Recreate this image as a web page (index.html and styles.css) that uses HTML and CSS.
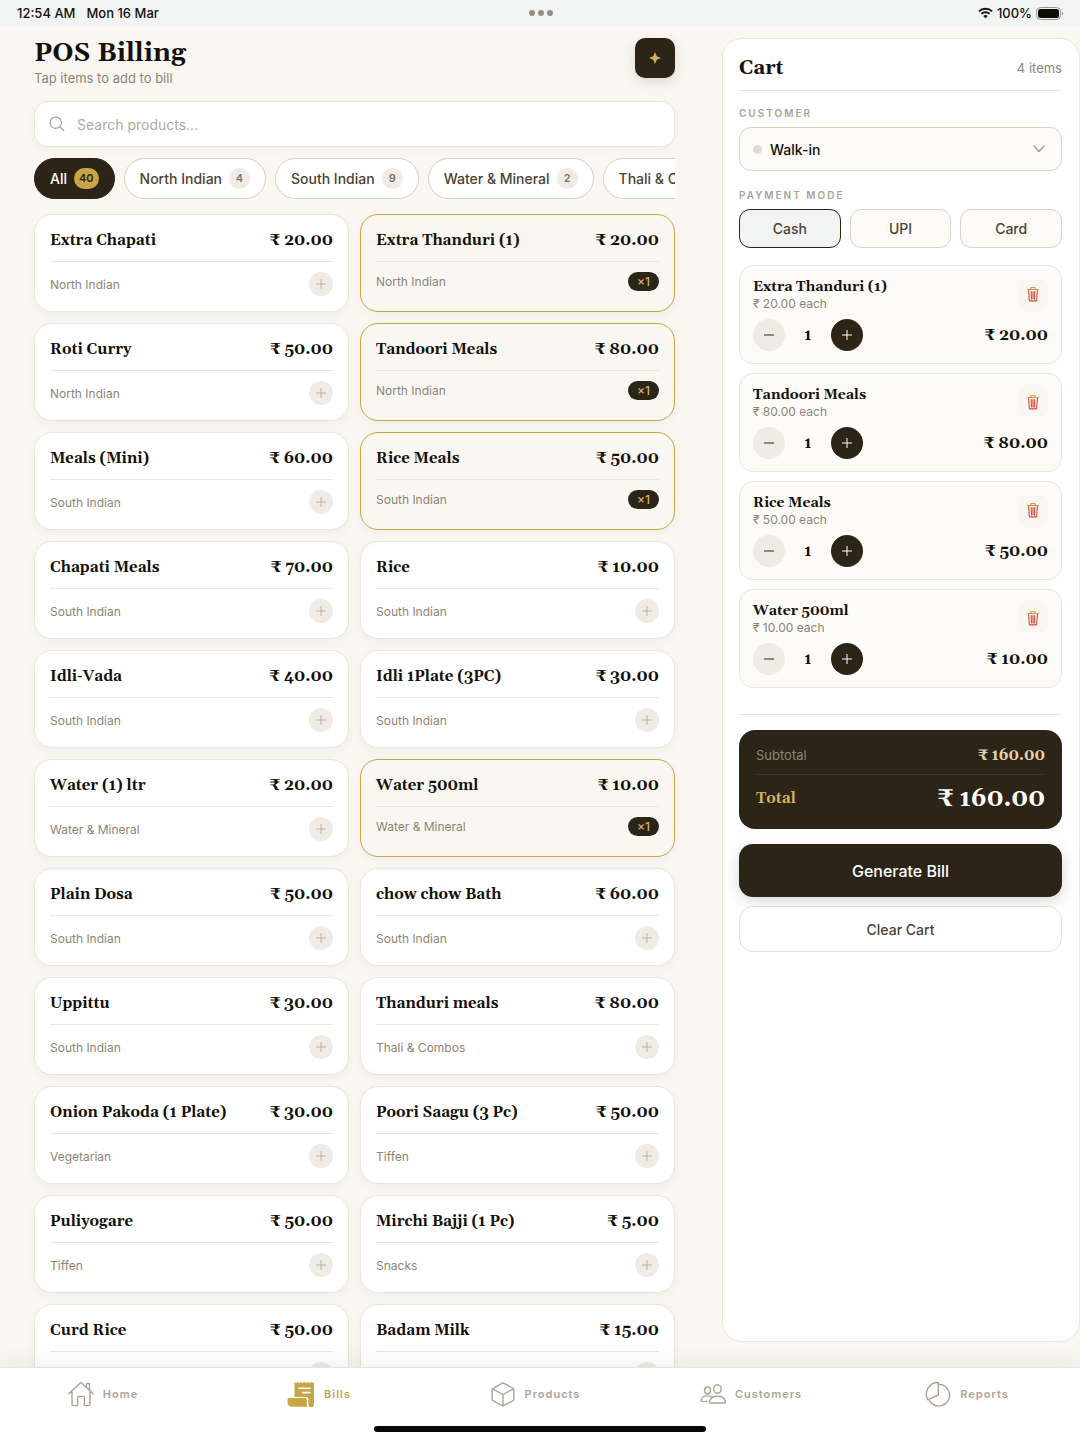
FILE: index.html
```html
<!DOCTYPE html>
<html lang="en">
<head>
    <meta charset="UTF-8">
    <meta name="viewport" content="width=device-width, initial-scale=1.0">
    <title>POS Billing</title>
    <link rel="stylesheet" href="styles.css">
</head>
<body>
    <!-- Shared icons -->
    <svg class="sprite" aria-hidden="true">
        <symbol id="icon-trash" viewBox="0 0 16 16">
            <path d="M3.600 4l.7 10.200c0 .4.300.7.700.7h6c.4 0 .7-.3.7-.7L12.400 4M6.200 5.500l.3 7.500M8 5.500V13M9.800 5.500L9.500 13" fill="none" stroke="currentColor" stroke-width="1.100" stroke-linejoin="round" stroke-linecap="round"/>
            <path d="M2.500 3.500h11M6 3.500V1.500h4v2" fill="none" stroke="#d9903f" stroke-width="1.200" stroke-linejoin="round" stroke-linecap="round"/>
        </symbol>
    </svg>

    <div class="status-bar">
        <div class="status-left"><span>12:54 AM</span><span>Mon 16 Mar</span></div>
        <div class="status-dots"><i></i><i></i><i></i></div>
        <div class="status-right">
            <svg class="wifi" viewBox="0 0 16 12" fill="none" stroke="currentColor" stroke-width="2">
                <path d="M1 4.300a10 10 0 0 1 14 0"/>
                <path d="M3.600 7a6.200 6.200 0 0 1 8.800 0"/>
                <path d="M8 11.600L5.600 9.200a3.400 3.400 0 0 1 4.800 0z" fill="currentColor" stroke="none"/>
            </svg>
            <span>100%</span>
            <svg class="battery" viewBox="0 0 28 13">
                <rect x=".5" y=".5" width="24" height="12" rx="4" fill="none" stroke="#9c978c"/>
                <rect x="2" y="2" width="21" height="9" rx="2.500" fill="#0f0c05"/>
                <path d="M26 4.500c1.600.6 1.600 3.400 0 4z" fill="#9c978c"/>
            </svg>
        </div>
    </div>

    <div class="main-container">
        <main class="catalog">
            <header class="page-header">
                <div>
                    <h1>POS Billing</h1>
                    <p>Tap items to add to bill</p>
                </div>
                <button class="sparkle-btn" aria-label="Quick actions">
                    <svg viewBox="0 0 12 12"><path d="M6 0l1.700 4.300L12 6 7.700 7.700 6 12 4.300 7.700 0 6l4.300-1.700z" fill="#d6b060"/></svg>
                </button>
            </header>

            <label class="search">
                <svg viewBox="0 0 18 18" fill="none" stroke="currentColor" stroke-width="1.200" stroke-linecap="round"><circle cx="7.500" cy="7.500" r="6.400"/><path d="M12.200 12.200l4.500 4.300"/></svg>
                <input type="text" placeholder="Search products..." aria-label="Search products">
            </label>

            <div class="chips">
                <button class="chip active">All <span class="count">40</span></button>
                <button class="chip">North Indian <span class="count">4</span></button>
                <button class="chip">South Indian <span class="count">9</span></button>
                <button class="chip">Water &amp; Mineral <span class="count">2</span></button>
                <button class="chip">Thali &amp; Combos</button>
            </div>

            <div class="product-grid">
                <article class="product">
                    <div class="product-head"><h3>Extra Chapati</h3><span class="price">₹ 20.00</span></div>
                    <div class="product-foot"><span>North Indian</span><button class="add" aria-label="Add Extra Chapati"></button></div>
                </article>
                <article class="product selected">
                    <div class="product-head"><h3>Extra Thanduri (1)</h3><span class="price">₹ 20.00</span></div>
                    <div class="product-foot"><span>North Indian</span><span class="qty-badge">×1</span></div>
                </article>
                <article class="product">
                    <div class="product-head"><h3>Roti Curry</h3><span class="price">₹ 50.00</span></div>
                    <div class="product-foot"><span>North Indian</span><button class="add" aria-label="Add Roti Curry"></button></div>
                </article>
                <article class="product selected">
                    <div class="product-head"><h3>Tandoori Meals</h3><span class="price">₹ 80.00</span></div>
                    <div class="product-foot"><span>North Indian</span><span class="qty-badge">×1</span></div>
                </article>
                <article class="product">
                    <div class="product-head"><h3>Meals (Mini)</h3><span class="price">₹ 60.00</span></div>
                    <div class="product-foot"><span>South Indian</span><button class="add" aria-label="Add Meals (Mini)"></button></div>
                </article>
                <article class="product selected">
                    <div class="product-head"><h3>Rice Meals</h3><span class="price">₹ 50.00</span></div>
                    <div class="product-foot"><span>South Indian</span><span class="qty-badge">×1</span></div>
                </article>
                <article class="product">
                    <div class="product-head"><h3>Chapati Meals</h3><span class="price">₹ 70.00</span></div>
                    <div class="product-foot"><span>South Indian</span><button class="add" aria-label="Add Chapati Meals"></button></div>
                </article>
                <article class="product">
                    <div class="product-head"><h3>Rice</h3><span class="price">₹ 10.00</span></div>
                    <div class="product-foot"><span>South Indian</span><button class="add" aria-label="Add Rice"></button></div>
                </article>
                <article class="product">
                    <div class="product-head"><h3>Idli-Vada</h3><span class="price">₹ 40.00</span></div>
                    <div class="product-foot"><span>South Indian</span><button class="add" aria-label="Add Idli-Vada"></button></div>
                </article>
                <article class="product">
                    <div class="product-head"><h3>Idli 1Plate (3PC)</h3><span class="price">₹ 30.00</span></div>
                    <div class="product-foot"><span>South Indian</span><button class="add" aria-label="Add Idli 1Plate (3PC)"></button></div>
                </article>
                <article class="product">
                    <div class="product-head"><h3>Water (1) ltr</h3><span class="price">₹ 20.00</span></div>
                    <div class="product-foot"><span>Water &amp; Mineral</span><button class="add" aria-label="Add Water (1) ltr"></button></div>
                </article>
                <article class="product selected">
                    <div class="product-head"><h3>Water 500ml</h3><span class="price">₹ 10.00</span></div>
                    <div class="product-foot"><span>Water &amp; Mineral</span><span class="qty-badge">×1</span></div>
                </article>
                <article class="product">
                    <div class="product-head"><h3>Plain Dosa</h3><span class="price">₹ 50.00</span></div>
                    <div class="product-foot"><span>South Indian</span><button class="add" aria-label="Add Plain Dosa"></button></div>
                </article>
                <article class="product">
                    <div class="product-head"><h3>chow chow Bath</h3><span class="price">₹ 60.00</span></div>
                    <div class="product-foot"><span>South Indian</span><button class="add" aria-label="Add chow chow Bath"></button></div>
                </article>
                <article class="product">
                    <div class="product-head"><h3>Uppittu</h3><span class="price">₹ 30.00</span></div>
                    <div class="product-foot"><span>South Indian</span><button class="add" aria-label="Add Uppittu"></button></div>
                </article>
                <article class="product">
                    <div class="product-head"><h3>Thanduri meals</h3><span class="price">₹ 80.00</span></div>
                    <div class="product-foot"><span>Thali &amp; Combos</span><button class="add" aria-label="Add Thanduri meals"></button></div>
                </article>
                <article class="product">
                    <div class="product-head"><h3>Onion Pakoda (1 Plate)</h3><span class="price">₹ 30.00</span></div>
                    <div class="product-foot"><span>Vegetarian</span><button class="add" aria-label="Add Onion Pakoda"></button></div>
                </article>
                <article class="product">
                    <div class="product-head"><h3>Poori Saagu (3 Pc)</h3><span class="price">₹ 50.00</span></div>
                    <div class="product-foot"><span>Tiffen</span><button class="add" aria-label="Add Poori Saagu"></button></div>
                </article>
                <article class="product">
                    <div class="product-head"><h3>Puliyogare</h3><span class="price">₹ 50.00</span></div>
                    <div class="product-foot"><span>Tiffen</span><button class="add" aria-label="Add Puliyogare"></button></div>
                </article>
                <article class="product">
                    <div class="product-head"><h3>Mirchi Bajji (1 Pc)</h3><span class="price">₹ 5.00</span></div>
                    <div class="product-foot"><span>Snacks</span><button class="add" aria-label="Add Mirchi Bajji"></button></div>
                </article>
                <article class="product">
                    <div class="product-head"><h3>Curd Rice</h3><span class="price">₹ 50.00</span></div>
                    <div class="product-foot"><span>South Indian</span><button class="add" aria-label="Add Curd Rice"></button></div>
                </article>
                <article class="product">
                    <div class="product-head"><h3>Badam Milk</h3><span class="price">₹ 15.00</span></div>
                    <div class="product-foot"><span>Beverages</span><button class="add" aria-label="Add Badam Milk"></button></div>
                </article>
            </div>
        </main>

        <aside class="cart">
            <header class="cart-header">
                <h2>Cart</h2>
                <span>4 items</span>
            </header>

            <label class="field-label" for="customer">Customer</label>
            <div class="select-wrap">
                <select id="customer">
                    <option>Walk-in</option>
                </select>
                <svg class="chevron" viewBox="0 0 12 8" fill="none" stroke="currentColor" stroke-width="1.400" stroke-linecap="round" stroke-linejoin="round"><path d="M1 1l5 5.500L11 1"/></svg>
            </div>

            <div class="field-label" id="paymentLabel">Payment mode</div>
            <div class="payment-modes" role="group" aria-labelledby="paymentLabel">
                <button class="mode active">Cash</button>
                <button class="mode">UPI</button>
                <button class="mode">Card</button>
            </div>

            <div class="cart-items">
                <div class="cart-item">
                    <div class="item-top">
                        <div><h4>Extra Thanduri (1)</h4><p>₹ 20.00 each</p></div>
                        <button class="remove" aria-label="Remove"><svg><use href="#icon-trash"/></svg></button>
                    </div>
                    <div class="item-bottom">
                        <button class="step" aria-label="Decrease"></button><b>1</b><button class="step plus" aria-label="Increase"></button>
                        <span class="price">₹ 20.00</span>
                    </div>
                </div>
                <div class="cart-item">
                    <div class="item-top">
                        <div><h4>Tandoori Meals</h4><p>₹ 80.00 each</p></div>
                        <button class="remove" aria-label="Remove"><svg><use href="#icon-trash"/></svg></button>
                    </div>
                    <div class="item-bottom">
                        <button class="step" aria-label="Decrease"></button><b>1</b><button class="step plus" aria-label="Increase"></button>
                        <span class="price">₹ 80.00</span>
                    </div>
                </div>
                <div class="cart-item">
                    <div class="item-top">
                        <div><h4>Rice Meals</h4><p>₹ 50.00 each</p></div>
                        <button class="remove" aria-label="Remove"><svg><use href="#icon-trash"/></svg></button>
                    </div>
                    <div class="item-bottom">
                        <button class="step" aria-label="Decrease"></button><b>1</b><button class="step plus" aria-label="Increase"></button>
                        <span class="price">₹ 50.00</span>
                    </div>
                </div>
                <div class="cart-item">
                    <div class="item-top">
                        <div><h4>Water 500ml</h4><p>₹ 10.00 each</p></div>
                        <button class="remove" aria-label="Remove"><svg><use href="#icon-trash"/></svg></button>
                    </div>
                    <div class="item-bottom">
                        <button class="step" aria-label="Decrease"></button><b>1</b><button class="step plus" aria-label="Increase"></button>
                        <span class="price">₹ 10.00</span>
                    </div>
                </div>
            </div>

            <div class="checkout">
                <div class="totals">
                    <div class="subtotal-row"><span>Subtotal</span><b>₹ 160.00</b></div>
                    <div class="total-row"><span>Total</span><b>₹ 160.00</b></div>
                </div>
                <button class="generate-btn">Generate Bill</button>
                <button class="clear-btn">Clear Cart</button>
            </div>
        </aside>
    </div>

    <nav class="tab-bar">
        <div class="tabs">
            <a class="tab" href="#home">
                <svg viewBox="0 0 26 26" fill="none" stroke="currentColor" stroke-width="1.400" stroke-linejoin="round" stroke-linecap="round"><path d="M1 12.500L12 2.200a1.200 1.200 0 0 1 1.800 0L25 12.500M4 10v13a1.600 1.600 0 0 0 1.600 1.600h4V17a1.600 1.600 0 0 1 1.600-1.600h3.600a1.600 1.600 0 0 1 1.600 1.600v7.600h4A1.600 1.600 0 0 0 22 23V10M18.500 6V2.500H21.500V9"/></svg>
                <span>Home</span>
            </a>
            <a class="tab active" href="#bills">
                <svg class="wide" viewBox="0 0 28 26"><path d="M7.500 1l1.600 1 1.600-1 1.600 1 1.600-1 1.700 1 1.700-1 1.700 1 1.600-1 1.700 1 1.700-1 1.700 1 1.300-1v22.400a2.800 2.800 0 0 1-5.600 0V18a2 2 0 0 0-2-2H7.500zM2 17h16a2 2 0 0 1 1.800 2v4.200c0 1.200.4 2 1 2.600H5A4.600 4.600 0 0 1 .5 21.200v-2.700A1.500 1.500 0 0 1 2 17z" fill="currentColor"/><path d="M12 7.200h11M15.500 11.600H23" stroke="#fff" stroke-width="1.600" stroke-linecap="round"/></svg>
                <span>Bills</span>
            </a>
            <a class="tab" href="#products">
                <svg viewBox="0 0 26 26" fill="none" stroke="currentColor" stroke-width="1.400" stroke-linejoin="round"><path d="M13 1.800l10 5.500a1.400 1.400 0 0 1 .8 1.200v10a1.400 1.400 0 0 1-.7 1.200L13 25 2.900 19.700a1.400 1.400 0 0 1-.7-1.200v-10a1.400 1.400 0 0 1 .7-1.200zM2.500 7.800L13 13.500l10.500-5.700M13 13.500V25"/></svg>
                <span>Products</span>
            </a>
            <a class="tab" href="#customers">
                <svg viewBox="0 0 26 26" fill="none" stroke="currentColor" stroke-width="1.400" stroke-linejoin="round" stroke-linecap="round"><ellipse cx="17.500" cy="8" rx="3.700" ry="4.300"/><path d="M17.500 15.200c-4 0-7.300 2-8 5.400-.2.900.3 1.400 1 1.400h14c.7 0 1.200-.5 1-1.400-.7-3.400-4-5.400-8-5.400z"/><ellipse cx="7.500" cy="9.500" rx="3" ry="3.500"/><path d="M11.500 15.800a9 9 0 0 0-4-.9c-3.200 0-5.900 1.700-6.500 4.300-.2.700.2 1.200.9 1.200h5"/></svg>
                <span>Customers</span>
            </a>
            <a class="tab" href="#reports">
                <svg viewBox="0 0 26 26" fill="none" stroke="currentColor" stroke-width="1.400" stroke-linejoin="round"><path d="M13.300 3.300A10.900 10.900 0 1 1 3.600 18.300L13.300 14z"/><path d="M13.300 3.300V1.500A11.700 11.700 0 0 0 2.700 18.700l.9-.4"/></svg>
                <span>Reports</span>
            </a>
        </div>
        <div class="home-indicator"></div>
    </nav>
</body>
</html>
```
FILE: styles.css
```css
* {
    margin: 0;
    padding: 0;
    box-sizing: border-box;
}

:root {
    --ink: #2c2417;
    --text: #14100a;
    --muted: #8c8576;
    --light: #aba496;
    --gold: #c8a546;
    --line: #ebe6db;
    --cream: #faf7f2;
    --beige: #f0ebe5;
    --serif: Georgia, Gelasio, 'DejaVu Serif', serif;
}

body {
    font-family: Inter, 'Liberation Sans', sans-serif;
    background: var(--cream);
    color: var(--text);
    height: 100vh;
    display: flex;
    flex-direction: column;
    overflow: hidden;
}

button {
    font-family: inherit;
    border: none;
    cursor: pointer;
}

.sprite {
    display: none;
}

/* Status bar */
.status-bar {
    display: grid;
    grid-template-columns: 1fr auto 1fr;
    align-items: center;
    height: 26px;
    padding: 0 16px 0 17px;
    background: #f2f4f3;
    font-size: 13px;
    font-weight: 500;
    flex-shrink: 0;
}

.status-left {
    display: flex;
    gap: 11px;
}

.status-dots {
    display: flex;
    gap: 3px;
}

.status-dots i {
    width: 6px;
    height: 6px;
    border-radius: 50%;
    background: #958e84;
}

.status-right {
    display: flex;
    justify-content: flex-end;
    align-items: center;
    gap: 4px;
}

.wifi {
    width: 15px;
    height: 12px;
}

.battery {
    width: 28px;
    height: 13px;
}

/* Layout */
.main-container {
    display: flex;
    flex: 1;
    min-height: 0;
}

.catalog {
    flex: 1;
    min-width: 0;
    display: flex;
    flex-direction: column;
    padding: 12px 47px 0 34px;
}

.page-header {
    display: flex;
    justify-content: space-between;
    align-items: flex-start;
    flex-shrink: 0;
    height: 63px;
}

.page-header h1 {
    font-family: var(--serif);
    font-size: 26px;
    line-height: 32px;
}

.page-header p {
    font-size: 13px;
    line-height: 16px;
    color: var(--muted);
}

.sparkle-btn {
    width: 40px;
    height: 40px;
    border-radius: 10px;
    background: var(--ink);
    box-shadow: 0 4px 12px rgba(44, 36, 23, 0.15);
    display: flex;
    align-items: center;
    justify-content: center;
}

.sparkle-btn svg {
    width: 12px;
    height: 12px;
}

.search {
    display: flex;
    align-items: center;
    gap: 12px;
    height: 46px;
    padding: 0 14px;
    background: #fff;
    border: 1px solid var(--line);
    border-radius: 14px;
    box-shadow: 0 2px 8px rgba(44, 36, 23, 0.04);
    color: #9f988b;
    flex-shrink: 0;
}

.search svg {
    width: 16px;
    height: 16px;
}

.search input {
    flex: 1;
    border: none;
    outline: none;
    background: transparent;
    font-family: inherit;
    font-size: 14px;
    color: var(--text);
}

.search input::placeholder {
    color: #b3ab9f;
}

.chips {
    display: flex;
    gap: 9px;
    margin-top: 11px;
    overflow: hidden;
    flex-shrink: 0;
}

.chip {
    display: flex;
    align-items: center;
    gap: 7px;
    flex-shrink: 0;
    height: 41px;
    padding: 0 15px;
    border: 1px solid #d6d1c4;
    border-radius: 21px;
    background: #fff;
    color: #4a4335;
    font-size: 14px;
    font-weight: 500;
}

.chip .count {
    min-width: 21px;
    padding: 0 5px;
    border-radius: 11px;
    background: var(--beige);
    color: #7d7567;
    font-size: 11px;
    font-weight: 600;
    line-height: 21px;
    text-align: center;
}

.chip.active {
    background: var(--ink);
    border-color: var(--ink);
    color: #fff;
}

.chip.active .count {
    background: var(--gold);
    color: var(--ink);
}

/* Products */
.product-grid {
    display: grid;
    grid-template-columns: 1fr 1fr;
    align-content: start;
    gap: 11px;
    margin-top: 15px;
    min-height: 0;
}

.product {
    padding: 14px 15px 15px;
    background: #fff;
    border: 1px solid var(--line);
    border-radius: 18px;
    box-shadow: 0 3px 10px rgba(44, 36, 23, 0.04);
}

.product.selected {
    background: var(--cream);
    border-color: var(--gold);
}

.product-head {
    display: flex;
    justify-content: space-between;
    align-items: center;
    padding-bottom: 10px;
    border-bottom: 1px solid var(--line);
    white-space: nowrap;
}

.product h3 {
    margin-top: 2px;
    font-family: var(--serif);
    font-size: 15px;
    line-height: 20px;
}

.price {
    font-family: var(--serif);
    font-size: 16px;
    font-weight: bold;
    line-height: 20px;
}

.product-foot {
    display: flex;
    justify-content: space-between;
    align-items: center;
    padding-top: 10px;
    font-size: 12px;
    color: var(--muted);
}

.add {
    position: relative;
    width: 24px;
    height: 24px;
    border-radius: 50%;
    background: var(--beige);
    color: #b8b1a4;
}

.qty-badge {
    padding: 0 9px;
    border-radius: 10px;
    background: var(--ink);
    color: #d6b060;
    font-weight: 500;
    line-height: 19px;
}

/* Plus and minus signs are drawn with bars */
.add::before,
.add::after,
.step::before,
.step.plus::after {
    content: "";
    position: absolute;
    top: 50%;
    left: 50%;
    width: 10px;
    height: 1px;
    background: currentColor;
    transform: translate(-50%, -50%);
}

.add::after,
.step.plus::after {
    width: 1px;
    height: 10px;
}

/* Cart */
.cart {
    width: 358px;
    flex-shrink: 0;
    margin: 12px 0 25px;
    padding: 16px 17px 16px 16px;
    background: #fff;
    border: 1px solid var(--line);
    border-radius: 20px;
}

.cart-header {
    display: flex;
    justify-content: space-between;
    align-items: center;
    padding-bottom: 10px;
    border-bottom: 1px solid var(--line);
    font-size: 13px;
    color: var(--muted);
}

.cart-header h2 {
    margin-top: 1px;
    font-family: var(--serif);
    font-size: 20px;
    line-height: 24px;
    color: var(--text);
}

.field-label {
    display: block;
    margin: 15px 0 7px;
    font-size: 10px;
    font-weight: 600;
    line-height: 14px;
    letter-spacing: 2px;
    text-transform: uppercase;
    color: var(--light);
}

.select-wrap {
    position: relative;
    margin-bottom: 17px;
}

.select-wrap::before {
    content: "";
    position: absolute;
    top: 18px;
    left: 14px;
    width: 9px;
    height: 9px;
    border-radius: 50%;
    background: #e2dcd1;
}

.select-wrap select {
    width: 100%;
    height: 44px;
    padding: 0 30px;
    appearance: none;
    border: 1px solid #d9d4c7;
    border-radius: 12px;
    background: #fcfbf8;
    color: var(--text);
    font-family: inherit;
    font-size: 14px;
    font-weight: 500;
}

.chevron {
    position: absolute;
    top: 18px;
    right: 17px;
    width: 12px;
    height: 8px;
    color: #a59e90;
}

.payment-modes {
    display: grid;
    grid-template-columns: repeat(3, 1fr);
    gap: 9px;
}

.mode {
    height: 39px;
    border: 1px solid #d9d4c7;
    border-radius: 11px;
    background: #fcfbf8;
    color: #4a4335;
    font-size: 14px;
    font-weight: 500;
}

.mode.active {
    border-color: var(--ink);
    background: #f2f4f3;
}

.cart-items {
    display: flex;
    flex-direction: column;
    gap: 9px;
    margin: 17px 0 26px;
}

.cart-item {
    padding: 13px 13px 12px;
    background: #fcfbf8;
    border: 1px solid var(--line);
    border-radius: 14px;
}

.item-top {
    display: flex;
    justify-content: space-between;
    height: 40px;
}

.item-top h4 {
    font-family: var(--serif);
    font-size: 14px;
    line-height: 16px;
}

.item-top p {
    font-size: 12px;
    line-height: 18px;
    color: var(--muted);
}

.remove {
    width: 30px;
    height: 30px;
    border-radius: 8px;
    background: var(--cream);
    color: #d4483a;
}

.remove svg {
    display: block;
    width: 16px;
    height: 16px;
    margin: 0 auto;
}

.item-bottom {
    display: flex;
    align-items: center;
    font-family: var(--serif);
}

.item-bottom b {
    width: 46px;
    font-size: 15px;
    text-align: center;
}

.item-bottom .price {
    margin-left: auto;
}

.step {
    position: relative;
    width: 32px;
    height: 32px;
    border-radius: 50%;
    background: var(--beige);
    color: var(--ink);
}

.step.plus {
    background: var(--ink);
    color: #fff;
}

/* Checkout */
.checkout {
    padding-top: 15px;
    border-top: 1px solid var(--line);
}

.totals {
    padding: 16px 17px;
    border-radius: 16px;
    background: var(--ink);
}

.subtotal-row,
.total-row {
    display: flex;
    justify-content: space-between;
    align-items: center;
}

.subtotal-row {
    padding-bottom: 9px;
    border-bottom: 1px solid #3b3527;
    font-size: 13px;
    line-height: 19px;
    color: #8c8576;
}

.subtotal-row b {
    font-family: var(--serif);
    font-size: 15px;
    color: #e4d3a8;
}

.total-row {
    padding-top: 10px;
    font-family: var(--serif);
    font-size: 15px;
    font-weight: bold;
    line-height: 28px;
    color: #d6b060;
}

.total-row b {
    font-size: 24px;
    color: #fff;
}

.generate-btn,
.clear-btn {
    display: block;
    width: 100%;
    border-radius: 14px;
}

.generate-btn {
    height: 53px;
    margin: 15px 0 9px;
    background: var(--ink);
    box-shadow: 0 4px 14px rgba(44, 36, 23, 0.18);
    color: #fff;
    font-size: 16px;
    font-weight: 500;
}

.clear-btn {
    height: 46px;
    background: #fff;
    border: 1px solid #e6e0d6;
    color: #4a4335;
    font-size: 14px;
    font-weight: 500;
}

/* Bottom navigation */
.tab-bar {
    position: relative;
    flex-shrink: 0;
    background: #fff;
    border-top: 1px solid var(--line);
    box-shadow: 0 -4px 20px rgba(44, 36, 23, 0.07);
}

.tabs {
    display: grid;
    grid-template-columns: repeat(5, 1fr);
    height: 58px;
    padding-bottom: 6px;
}

.tab {
    display: flex;
    align-items: center;
    justify-content: center;
    gap: 9px;
    padding-right: 10px;
    color: var(--light);
    font-size: 11px;
    font-weight: 600;
    letter-spacing: 1px;
    text-decoration: none;
}

.tab.active {
    color: var(--gold);
}

.tab svg {
    width: 26px;
    height: 26px;
}

.tab svg.wide {
    width: 28px;
}

.home-indicator {
    width: 332px;
    height: 6px;
    margin: 0 auto 8px;
    border-radius: 3px;
    background: #0a0804;
}
```
